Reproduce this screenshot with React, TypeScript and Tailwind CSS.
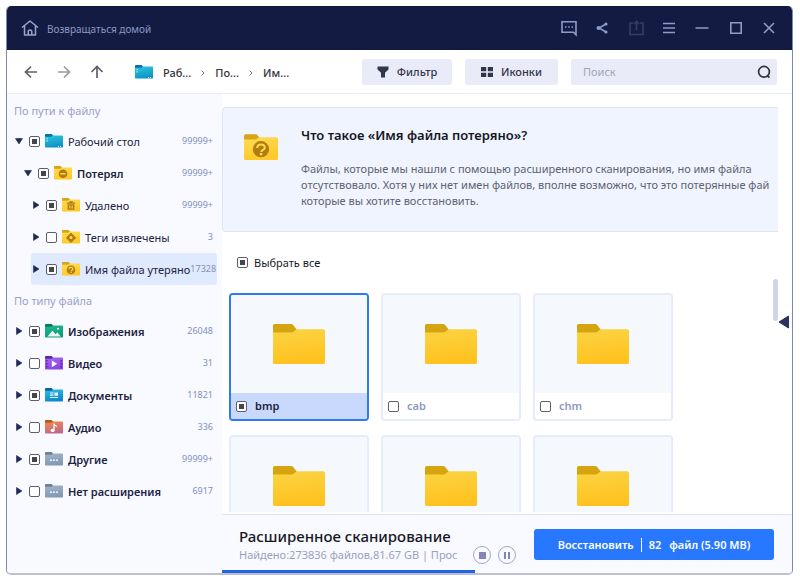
import { useEffect, useId, useRef, useState, type ReactNode } from "react";
import clsx from "clsx";

type CheckState = "none" | "partial" | "all";
type Badge = "minus" | "trash" | "tag" | "question";
type Kind = "desktop" | "images" | "video" | "docs" | "audio" | "other" | Badge;

interface TreeItem {
  label: string;
  count: string;
  kind: Kind;
  level: 0 | 1 | 2;
  check: CheckState;
  open?: boolean;
  active?: boolean;
  bold?: boolean;
}

const pathItems: TreeItem[] = [
  { label: "Рабочий стол", count: "99999+", kind: "desktop", level: 0, check: "partial", open: true },
  { label: "Потерял", count: "99999+", kind: "minus", level: 1, check: "partial", open: true, bold: true },
  { label: "Удалено", count: "99999+", kind: "trash", level: 2, check: "partial" },
  { label: "Теги извлечены", count: "3", kind: "tag", level: 2, check: "none" },
  { label: "Имя файла утеряно", count: "17328", kind: "question", level: 2, check: "partial", active: true },
];

const typeItems: TreeItem[] = [
  { label: "Изображения", count: "26048", kind: "images", level: 0, check: "partial", bold: true },
  { label: "Видео", count: "31", kind: "video", level: 0, check: "none", bold: true },
  { label: "Документы", count: "11821", kind: "docs", level: 0, check: "partial", bold: true },
  { label: "Аудио", count: "336", kind: "audio", level: 0, check: "none", bold: true },
  { label: "Другие", count: "99999+", kind: "other", level: 0, check: "partial", bold: true },
  { label: "Нет расширения", count: "6917", kind: "other", level: 0, check: "none", bold: true },
];

const folders = ["bmp", "cab", "chm"];

const indent = ["ml-[7px]", "ml-4", "ml-6"];

// tab colour, gradient top, gradient bottom
const folderColors: Record<Kind, [string, string, string]> = {
  desktop: ["#0a6fae", "#2fc6de", "#0d95c4"],
  images: ["#087a5c", "#1fb98f", "#129a78"],
  video: ["#5a26b0", "#a566f2", "#8a45e0"],
  docs: ["#0b5fa5", "#2fc0e0", "#0f86cf"],
  audio: ["#b5581a", "#f58a42", "#c06a8c"],
  other: ["#6b7f97", "#a3b5c9", "#8399b2"],
  minus: ["#d9a514", "#ffdc55", "#ffc928"],
  trash: ["#d9a514", "#ffdc55", "#ffc928"],
  tag: ["#d9a514", "#ffdc55", "#ffc928"],
  question: ["#d9a514", "#ffdc55", "#ffc928"],
};

function FolderGlyph({ kind }: { kind: Kind }) {
  switch (kind) {
    case "desktop":
      return (
        <g fill="#c8f3fb">
          <path d="M1.500 4h1.200v1.200H1.500zM1.500 6.300h1.200v1.200H1.500zM13 12h1v1h-1zM15 12h1v1h-1z" />
        </g>
      );
    case "images":
      return (
        <g fill="#fff">
          <path d="M2.500 12.400l5-6 3 3.800 1.900-1.900 3.300 4.100z" opacity=".9" />
          <circle cx="13" cy="4.800" r="1" />
        </g>
      );
    case "video":
      return (
        <g>
          <path d="M1.200 4h1.200v1.400H1.200zM1.200 7h1.200v1.400H1.200zM1.200 10h1.200v1.400H1.200zM15.600 4h1.200v1.400h-1.200zM15.600 7h1.200v1.400h-1.200zM15.600 10h1.200v1.400h-1.200z" fill="#4c1d95" />
          <path d="M6.800 4.400l5.400 3.400-5.400 3.400z" fill="#fff" />
        </g>
      );
    case "docs":
      return (
        <g fill="#e9fbff">
          <path d="M5 4.400h3.500v1.200H5zM5 6.600h3.500v1.200H5zM9.500 4.400H13v3.400H9.500zM5 8.900h8v1.200H5z" />
        </g>
      );
    case "audio":
      return (
        <g fill="#fff">
          <ellipse cx="7.600" cy="10.400" rx="2" ry="1.600" />
          <path d="M8.400 3.400h1.200c.3 1.600 2.600 1.600 2.600 4-.6-.9-1.600-1.300-2.600-1.400v4.500H8.400z" />
        </g>
      );
    case "other":
      return (
        <g fill="#fff">
          <circle cx="6" cy="8.200" r=".9" />
          <circle cx="9" cy="8.200" r=".9" />
          <circle cx="12" cy="8.200" r=".9" />
        </g>
      );
    case "minus":
      return (
        <g>
          <circle cx="9" cy="7.800" r="4.300" fill="#b07d12" />
          <path d="M6.400 7h5.200v1.600H6.400z" fill="#ffd84e" />
        </g>
      );
    case "trash":
      return (
        <g>
          <path d="M4.800 4.600h8.400v1.200H4.800zM7.200 3.300h3.600v1.300H7.200zM5.600 6.200h6.800v5.600H5.600z" fill="#b07d12" />
          <path d="M7.300 7.400h1.100v3H7.300zM9.600 7.400h1.100v3H9.600z" fill="#ffd84e" />
        </g>
      );
    case "tag":
      return (
        <g>
          <path d="M9 3l4.800 4.800L9 12.600 4.200 7.800z" fill="#b07d12" stroke="#b07d12" strokeWidth=".8" strokeLinejoin="round" />
          <circle cx="9" cy="7.400" r="1.500" fill="#ffd84e" />
        </g>
      );
    case "question":
      return (
        <g>
          <circle cx="9" cy="7.900" r="4.300" fill="#b07d12" />
          <path d="M7 7.300c0-1.200.9-1.900 2-1.900s2 .6 2 1.700c0 1.200-1.900 1.200-1.900 2.300M8.400 10.500h1.300" fill="none" stroke="#ffd84e" strokeWidth="1.100" />
        </g>
      );
  }
}

function SmallFolder({ kind, className }: { kind: Kind; className?: string }) {
  const id = useId();
  const [tab, top, bottom] = folderColors[kind];
  return (
    <svg viewBox="0 0 18 14" className={clsx("shrink-0", className ?? "h-[14px] w-[18px]")} aria-hidden="true">
      <defs>
        <linearGradient id={id} x1="0" y1="0" x2="0.3" y2="1">
          <stop offset="0" stopColor={top} />
          <stop offset="1" stopColor={bottom} />
        </linearGradient>
      </defs>
      <path d="M0 .8Q0 0 .8 0h5.800l1.800 2-1.600 2H0z" fill={tab} />
      <path d="M0 2.800h6.200L8 1.600h9.200q.8 0 .8.8v10.400q0 .8-.8.8H.8q-.8 0-.8-.8z" fill={`url(#${id})`} />
      <FolderGlyph kind={kind} />
    </svg>
  );
}

function BigFolder() {
  const id = useId();
  return (
    <svg viewBox="0 0 52 40" className="h-10 w-[52px]" aria-hidden="true">
      <defs>
        <linearGradient id={id} x1="0" y1="0" x2="0.2" y2="1">
          <stop offset="0" stopColor="#fbd444" />
          <stop offset="1" stopColor="#ffc21f" />
        </linearGradient>
      </defs>
      <path d="M0 1.600Q0 0 1.600 0h16.600q1 0 1.800.8l4 5.200-4 4H0z" fill="#d6a40f" />
      <path d="M0 8.400h18.600q1 0 1.900-.7l2.300-1.800q.9-.6 2-.6h25.600q1.600 0 1.600 1.600v31.500q0 1.600-1.600 1.600H1.600Q0 40 0 38.400z" fill={`url(#${id})`} />
    </svg>
  );
}

function Checkbox({ id, state, label }: { id?: string; state: CheckState; label?: string }) {
  const ref = useRef<HTMLInputElement>(null);

  useEffect(() => {
    if (ref.current) ref.current.indeterminate = state === "partial";
  }, [state]);

  return (
    <input
      ref={ref}
      id={id}
      type="checkbox"
      aria-label={label}
      defaultChecked={state === "all"}
      className="grid size-[11px] shrink-0 appearance-none place-content-center rounded-[2px] border border-[#5c5f6b] bg-white before:size-[5px] before:bg-transparent checked:before:bg-[#45454d] indeterminate:before:bg-[#45454d]"
    />
  );
}

function TreeRow({ item }: { item: TreeItem }) {
  const id = useId();
  return (
    <li
      className={clsx(
        "flex h-8 items-center gap-[5px] rounded-[3px] pr-1",
        indent[item.level],
        item.active && "bg-[#e0eaff]"
      )}
    >
      <button type="button" aria-label="Развернуть" className="grid w-[10px] shrink-0 place-items-center">
        <svg viewBox="0 0 8 8" className={clsx("size-2", item.open && "rotate-90")} aria-hidden="true">
          <path d="M1.500.5l5.500 3.500-5.500 3.500z" fill="#222a50" stroke="#222a50" strokeWidth=".6" strokeLinejoin="round" />
        </svg>
      </button>
      <Checkbox id={id} state={item.check} />
      <SmallFolder kind={item.kind} />
      <label
        htmlFor={id}
        className={clsx("pt-[2px] whitespace-nowrap text-[#1d2340]", item.bold && "font-semibold")}
      >
        {item.label}
      </label>
      <span className="-ml-[5px] flex-1 text-right text-[9px] text-[#858fba]">{item.count}</span>
    </li>
  );
}

function TitleButton({ label, dim, children }: { label: string; dim?: boolean; children: ReactNode }) {
  return (
    <button type="button" aria-label={label} disabled={dim} className={dim ? "text-[#343c66]" : "text-[#8d9bc8]"}>
      <svg viewBox="0 0 20 20" className="size-5" fill="none" stroke="currentColor" strokeWidth="1.600" aria-hidden="true">
        {children}
      </svg>
    </button>
  );
}

function NavButton({ label, d, dim }: { label: string; d: string; dim?: boolean }) {
  return (
    <button type="button" aria-label={label} className={dim ? "text-[#9a9aa0]" : "text-[#5f5f66]"}>
      <svg viewBox="0 0 14 14" className="size-[14px]" fill="none" stroke="currentColor" strokeWidth="1.700" aria-hidden="true">
        <path d={d} />
      </svg>
    </button>
  );
}

function Crumb({ children }: { children: string }) {
  return (
    <a href="#" className="text-[#33343c]">
      {children}
    </a>
  );
}

function CrumbArrow() {
  return (
    <svg viewBox="0 0 4 6" className="h-[6px] w-1" fill="none" stroke="#7b7c85" aria-hidden="true">
      <path d="M.5.5L3 3 .5 5.500" />
    </svg>
  );
}

function FolderPreview() {
  return (
    <div className="grid h-[98px] shrink-0 place-items-center bg-[#f5f9fe]">
      <BigFolder />
    </div>
  );
}

function FolderCard({ name, selected, onSelect }: { name: string; selected: boolean; onSelect: () => void }) {
  const id = useId();
  return (
    <li
      onClick={onSelect}
      className={clsx(
        "flex h-32 flex-col overflow-hidden rounded-[4px] border-2 bg-white",
        selected ? "border-[#2f7aee]" : "border-[#e6ecfb]"
      )}
    >
      <FolderPreview />
      <div className={clsx("flex h-[26px] items-center gap-2 px-[5px]", selected && "bg-[#c9d9fd]")}>
        <Checkbox id={id} state={selected ? "partial" : "none"} />
        <label htmlFor={id} className={clsx("font-semibold", selected ? "text-[#1d2340]" : "text-[#8f98bf]")}>
          {name}
        </label>
      </div>
    </li>
  );
}

export default function App() {
  const [selected, setSelected] = useState("bmp");
  const progress = 44.4;

  return (
    <div className="h-screen min-h-[480px] bg-white pt-[6px] pr-[7px] pb-1 pl-[6px] font-['Noto_Sans',sans-serif] text-[11px] leading-4">
      <div className="flex h-full flex-col overflow-hidden rounded-[5px] border border-t-0 border-b-2 border-[#7f87ab] border-b-[#bdc0d4] bg-white">
        <header className="flex h-11 shrink-0 items-center bg-[#141b43] pr-[13px] pl-[14px]">
          <a href="#" className="flex items-center gap-2 text-[10px] text-[#8d97c4]">
            <svg viewBox="0 0 18 16" className="h-4 w-[18px]" fill="none" stroke="#98a4d2" strokeWidth="1.500" strokeLinejoin="round" aria-hidden="true">
              <path d="M1 7.500L9 1l8 6.500M3.500 6v9h11V6M7.200 15v-3.200a1.800 1.800 0 0 1 3.600 0V15" />
            </svg>
            <span className="pt-px">Возвращаться домой</span>
          </a>
          <div className="ml-auto flex w-[220px] justify-between">
            <TitleButton label="Отзыв">
              <path d="M3 3.800h14v13l-2.500-2.600H3z" />
              <path d="M6 9h1.500M9.300 9h1.500M12.600 9h1.500" />
            </TitleButton>
            <TitleButton label="Поделиться">
              <path d="M14 6L7 10l7 4" />
              <g fill="currentColor" stroke="none">
                <circle cx="14" cy="6" r="1.600" />
                <circle cx="6.500" cy="10" r="2" />
                <circle cx="14" cy="14" r="1.600" />
              </g>
            </TitleButton>
            <TitleButton label="Экспорт" dim>
              <path d="M7 5H4v11.500h13V5h-3M10.500 12.500V3.500M8 6l2.500-2.500L13 6" />
            </TitleButton>
            <TitleButton label="Меню">
              <path d="M4 5.500h12M4 10h12M4 14.500h12" />
            </TitleButton>
            <TitleButton label="Свернуть">
              <path d="M3.500 10h13" />
            </TitleButton>
            <TitleButton label="Развернуть окно">
              <path d="M4.800 4.800h10.400v10.400H4.800z" />
            </TitleButton>
            <TitleButton label="Закрыть">
              <path d="M5 5l10 10M15 5L5 15" />
            </TitleButton>
          </div>
        </header>

        <div className="flex h-11 shrink-0 items-center border-b border-[#e9eef6] pr-[15px] pl-[17px]">
          <div className="flex items-center gap-[19px]">
            <NavButton label="Назад" d="M13 7H2M7 1.500L1.500 7 7 12.500" />
            <NavButton label="Вперёд" d="M1 7h11M7 1.500L12.500 7 7 12.500" dim />
            <NavButton label="Вверх" d="M7 13V2M1.500 7L7 1.500 12.500 7" />
          </div>
          <SmallFolder kind="desktop" className="ml-[31px] h-[14px] w-[18px]" />
          <nav aria-label="Путь" className="ml-[10px] flex items-center gap-[10px] pt-[2px] font-medium">
            <Crumb>Раб...</Crumb>
            <CrumbArrow />
            <Crumb>По...</Crumb>
            <CrumbArrow />
            <Crumb>Им...</Crumb>
          </nav>
          <div className="ml-auto flex gap-[13px] text-[#33354a]">
            <button type="button" className="flex h-[26px] w-[90px] items-center justify-center gap-2 rounded-[3px] bg-[#e9ecf8] font-medium">
              <svg viewBox="0 0 12 12" className="size-3" aria-hidden="true">
                <path d="M.5.5h11v3L8 6.800v4.700H4V6.800L.5 3.500z" fill="#33354a" />
              </svg>
              Фильтр
            </button>
            <button type="button" className="flex h-[26px] w-[93px] items-center justify-center gap-2 rounded-[3px] bg-[#e9ecf8] font-medium">
              <svg viewBox="0 0 12 12" className="size-3" aria-hidden="true">
                <path d="M0 1h5.200v4.200H0zM6.800 1H12v4.200H6.800zM0 6.800h5.200V11H0zM6.800 6.800H12V11H6.800z" fill="#33354a" />
              </svg>
              Иконки
            </button>
            <div className="flex h-[26px] w-[206px] items-center rounded-[3px] bg-[#e9ecf8] pr-[6px] pl-3">
              <input type="search" aria-label="Поиск" placeholder="Поиск" className="min-w-0 flex-1 bg-transparent outline-none placeholder:text-[#a3a6b8]" />
              <button type="button" aria-label="Найти">
                <svg viewBox="0 0 14 14" className="size-[14px]" fill="none" stroke="#33343c" strokeWidth="1.700" aria-hidden="true">
                  <circle cx="7" cy="6.800" r="5.400" />
                  <path d="M10 10.500l2.500 2" />
                </svg>
              </button>
            </div>
          </div>
        </div>

        <div className="flex min-h-0 flex-1">
          <aside className="w-[215px] shrink-0 overflow-hidden bg-[#f8faff] pt-px pr-[5px]">
            <h2 className="flex h-[30px] items-center pt-[2px] pl-[7px] text-[#9ba0c8]">По пути к файлу</h2>
            <ul>
              {pathItems.map((item) => (
                <TreeRow key={item.label} item={item} />
              ))}
            </ul>
            <h2 className="flex h-[30px] items-center pt-[2px] pl-[7px] text-[#9ba0c8]">По типу файла</h2>
            <ul>
              {typeItems.map((item) => (
                <TreeRow key={item.label} item={item} />
              ))}
            </ul>
          </aside>

          <main className="relative flex min-w-0 flex-1 flex-col">
            <div className="mr-[14px] mb-[2px] min-h-0 flex-1 overflow-hidden pt-[13px]">
              <section className="flex h-[125px] gap-[23px] overflow-hidden rounded-l-[4px] border border-r-0 border-[#dde5f7] bg-[#f0f4ff] pt-[18px] pl-[21px]">
                <SmallFolder kind="question" className="mt-2 h-[27px] w-[34px]" />
                <div className="whitespace-nowrap">
                  <h1 className="text-[13px] leading-[18px] font-semibold text-[#17181f]">Что такое «Имя файла потеряно»?</h1>
                  <p className="mt-[17px] text-[#5d6270]">
                    Файлы, которые мы нашли с помощью расширенного сканирования, но имя файла
                    <br />
                    отсутствовало. Хотя у них нет имен файлов, вполне возможно, что это потерянные фай
                    <br />
                    которые вы хотите восстановить.
                  </p>
                </div>
              </section>

              <div className="flex h-[61px] items-center gap-[6px] pl-[15px]">
                <Checkbox id="select-all" state="partial" />
                <label htmlFor="select-all" className="pt-px text-[#17181f]">
                  Выбрать все
                </label>
              </div>

              <ul className="grid grid-cols-[repeat(auto-fill,140px)] gap-x-3 gap-y-[14px] pl-[7px]">
                {folders.map((name) => (
                  <FolderCard key={name} name={name} selected={name === selected} onSelect={() => setSelected(name)} />
                ))}
                {[0, 1, 2].map((slot) => (
                  <li key={slot} className="h-32 overflow-hidden rounded-[4px] border-2 border-[#e6ecfb] bg-white">
                    <FolderPreview />
                  </li>
                ))}
              </ul>
            </div>

            {/* scroll thumb and the handle that opens the preview pane */}
            <div className="absolute top-[185px] right-[14px] h-[42px] w-[5px] rounded-full bg-[#cdd5e6]" />
            <button type="button" aria-label="Предпросмотр" className="absolute top-[221px] right-[2px]">
              <svg viewBox="0 0 12 14" className="h-[14px] w-3" aria-hidden="true">
                <path d="M1 7l9.500-6v12z" fill="#2b3260" stroke="#2b3260" strokeLinejoin="round" />
              </svg>
            </button>

            <footer className="relative flex h-[59px] shrink-0 items-center border-t border-[#dfe3ee] bg-[#f8faff] pr-[18px] pl-[17px]">
              <div className="w-[224px] pt-[2px]">
                <h2 className="text-[15px] leading-5 font-medium whitespace-nowrap text-[#17181f]">Расширенное сканирование</h2>
                <p className="leading-[18px] whitespace-nowrap text-[#9ba0c0]">
                  Найдено:273836 файлов,81.67 GB | Прос
                </p>
              </div>
              <div className="mt-[22px] ml-[10px] flex gap-[7px]">
                <button type="button" aria-label="Остановить" className="grid size-[18px] place-items-center rounded-full border border-[#a5a5cc]">
                  <span className="size-[7px] bg-[#8484b8]" />
                </button>
                <button type="button" aria-label="Пауза" className="grid size-[18px] place-items-center rounded-full border border-[#a5a5cc]">
                  <span className="h-[7px] w-[6px] border-x-2 border-[#8484b8]" />
                </button>
              </div>
              <button type="button" className="ml-auto flex h-[31px] w-[240px] items-center justify-center gap-[7px] rounded-[3px] bg-[#2878ff] pt-px font-semibold text-white">
                Восстановить
                <span className="h-[14px] w-px bg-white" />
                <span className="flex gap-2">
                  <span>82</span>
                  <span>файл (5.90 MB)</span>
                </span>
              </button>
              <div
                role="progressbar"
                aria-label="Сканирование"
                aria-valuenow={progress}
                className="absolute bottom-0 left-0 h-[3px] bg-[#1f66e0]"
                style={{ width: `${progress}%` }}
              />
            </footer>
          </main>
        </div>
      </div>
    </div>
  );
}
